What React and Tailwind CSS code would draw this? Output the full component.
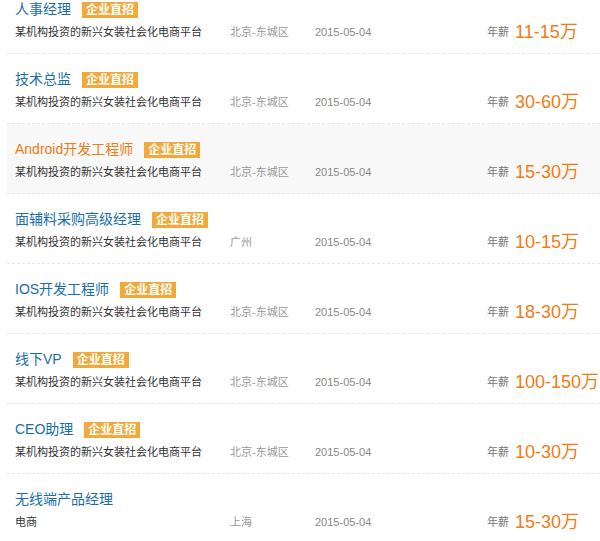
const rows = [
  ["人事经理", true, "某机构投资的新兴女装社会化电商平台", "北京-东城区", "11-15万"],
  ["技术总监", true, "某机构投资的新兴女装社会化电商平台", "北京-东城区", "30-60万"],
  ["Android开发工程师", true, "某机构投资的新兴女装社会化电商平台", "北京-东城区", "15-30万", true],
  ["面辅料采购高级经理", true, "某机构投资的新兴女装社会化电商平台", "广州", "10-15万"],
  ["IOS开发工程师", true, "某机构投资的新兴女装社会化电商平台", "北京-东城区", "18-30万"],
  ["线下VP", true, "某机构投资的新兴女装社会化电商平台", "北京-东城区", "100-150万"],
  ["CEO助理", true, "某机构投资的新兴女装社会化电商平台", "北京-东城区", "10-30万"],
  ["无线端产品经理", false, "电商", "上海", "15-30万"],
];

export default function App() {
  return (
    <div className="w-[600px] h-[541px] overflow-hidden bg-white" style={{ fontFamily: '"Liberation Sans", "Noto Sans CJK SC", sans-serif' }}>
      <div className="-mt-[16px]">
        {rows.map(([t, tag, d, loc, sal, hl], i) => (
          <div key={i} className={`ml-[7px] h-[70px] pl-[8px] pt-[15px] border-b border-dashed border-[#e6e6e6] ${hl ? "bg-[#f8f8f8]" : ""}`}>
            <div className="h-[21px] flex items-center">
              <span className={`text-[14px] ${hl ? "text-[#f07c14]" : "text-[#1a6ea8]"}`}>{t}</span>
              {tag && <span className="ml-[11px] bg-[#f2a93b] text-white text-[12px] font-bold leading-[16px] px-[4px]">企业直招</span>}
            </div>
            <div className="h-[24px] flex items-center text-[11px]">
              <span className="w-[215px] text-[#333]">{d}</span>
              <span className="w-[85px] text-[#999]">{loc}</span>
              <span className="w-[172px] text-[#888]">2015-05-04</span>
              <span className="w-[28px] text-[#777]">年薪</span>
              <span className="text-[18px] text-[#f07c14] whitespace-nowrap">{sal}</span>
            </div>
          </div>
        ))}
      </div>
    </div>
  );
}
